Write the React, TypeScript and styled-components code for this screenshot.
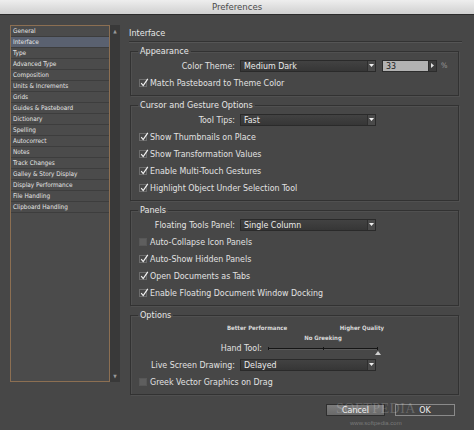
import styled, { createGlobalStyle } from 'styled-components';

const GlobalStyle = createGlobalStyle`
  html, body {
    margin: 0;
    padding: 0;
    background: #474747;
  }
  * {
    box-sizing: border-box;
  }
`;

const font = `"DejaVu Sans Condensed", "DejaVu Sans", sans-serif`;

const Window = styled.div`
  position: relative;
  width: 474px;
  height: 430px;
  overflow: hidden;
  background: #474747;
  font-family: ${font};
  color: #e2e2e2;
`;

const TitleBar = styled.div`
  height: 15px;
  line-height: 14px;
  text-align: center;
  font-size: 9.5px;
  color: #4a4a4a;
  background: linear-gradient(#eeeeee, #d0d0d0);
  border-bottom: 1px solid #2c2c2c;
`;

const Body = styled.div`
  display: flex;
  padding: 10px 0 0 10px;
`;

const Sidebar = styled.div`
  display: flex;
  height: 357px;
`;

const List = styled.ul`
  margin: 0;
  padding: 0;
  list-style: none;
  width: 100px;
  background: #4b4b4b;
  border: 1px solid #8c6f52;
`;

const Item = styled.li<{ $active?: boolean }>`
  height: 11px;
  line-height: 10px;
  padding-left: 2px;
  font-size: 6.4px;
  color: #e4e4e4;
  background: ${(p) => (p.$active ? '#5a6170' : 'transparent')};
  border-bottom: 1px solid #3d3d3d;
  white-space: nowrap;
`;

const Scrollbar = styled.div`
  width: 10px;
  background: #393939;
  display: flex;
  flex-direction: column;
  justify-content: space-between;
  align-items: center;
  padding: 3px 0;
  font-size: 5px;
  color: #9a9a9a;
`;

const Main = styled.div`
  margin-left: 9px;
  width: 333px;
`;

const Heading = styled.div`
  margin-top: 2px;
  height: 15px;
  line-height: 12px;
  font-size: 9px;
  color: #e6e6e6;
  border-bottom: 1px solid #333333;
  box-shadow: 0 1px 0 #555555;
`;

const Group = styled.fieldset`
  margin: 3px 0 0 1px;
  width: 329px;
  padding: 0 7px 4px 7px;
  border: 1px solid #323232;
  box-shadow: inset 1px 1px 0 #505050, 1px 1px 0 #505050;
  min-inline-size: 0;
`;

const Legend = styled.legend`
  padding: 0 2px;
  line-height: 12px;
  font-size: 9px;
  color: #e6e6e6;
`;

const Row = styled.div`
  display: flex;
  align-items: center;
  height: 17px;
  font-size: 8.8px;
`;

const Label = styled.span<{ $width?: number }>`
  width: ${(p) => p.$width ?? 97}px;
  text-align: right;
  white-space: nowrap;
  flex-shrink: 0;
`;

const Select = styled.div<{ $width?: number }>`
  display: flex;
  align-items: center;
  justify-content: space-between;
  margin-left: 5px;
  width: ${(p) => p.$width ?? 136}px;
  height: 12px;
  padding-left: 3px;
  background: linear-gradient(#424242, #363636);
  border: 1px solid #2a2a2a;
  color: #ececec;
  font-size: 8.8px;
  line-height: 10px;
`;

const Arrow = styled.span`
  display: flex;
  align-items: center;
  justify-content: center;
  width: 8px;
  height: 10px;
  border-left: 1px solid #2e2e2e;
  background: #4a4a4a;
`;

const NumberBox = styled.div`
  display: flex;
  margin-left: 6px;
  height: 12px;
`;

const NumberField = styled.div`
  width: 47px;
  height: 12px;
  padding-left: 3px;
  background: #b2b2b2;
  border: 1px solid #2c2c2c;
  color: #1c1c1c;
  font-size: 8.8px;
  line-height: 10px;
`;

const Stepper = styled.span`
  display: flex;
  align-items: center;
  justify-content: center;
  width: 8px;
  height: 12px;
  background: #3c3c3c;
  border: 1px solid #2c2c2c;
  border-left: none;
`;

const Unit = styled.span`
  margin-left: 4px;
  font-size: 7.5px;
  color: #9c9c9c;
`;

const Box = styled.span<{ $checked?: boolean }>`
  position: relative;
  width: 8px;
  height: 8px;
  margin: 0 3px 0 1px;
  flex-shrink: 0;
  background: ${(p) => (p.$checked ? '#474747' : '#5e5e5e')};
  border: 1px solid ${(p) => (p.$checked ? '#6c6c6c' : '#575757')};
  svg {
    position: absolute;
    left: 0;
    top: -2px;
  }
`;

const ScaleLabels = styled.div`
  display: flex;
  justify-content: space-between;
  margin: 1px 0 0 89px;
  width: 157px;
  height: 11px;
  line-height: 11px;
  font-size: 6px;
  font-weight: bold;
  color: #d8d8d8;
`;

const ScaleMid = styled.div`
  margin-left: 130px;
  width: 110px;
  height: 10px;
  line-height: 10px;
  text-align: center;
  font-size: 6px;
  font-weight: bold;
  color: #d8d8d8;
`;

const SliderRow = styled.div`
  display: flex;
  align-items: center;
  height: 10px;
  font-size: 8.8px;
  margin-bottom: 3px;
`;

const Track = styled.div`
  position: relative;
  margin-left: 6px;
  width: 110px;
  height: 1px;
  background: #151515;
  box-shadow: 0 1px 0 #5a5a5a;
`;

const Tick = styled.span<{ $at: number }>`
  position: absolute;
  top: -1px;
  left: ${(p) => p.$at}%;
  width: 1px;
  height: 3px;
  background: #151515;
`;

const Thumb = styled.svg`
  position: absolute;
  right: -3px;
  top: 3px;
`;

const Buttons = styled.div`
  display: flex;
  justify-content: flex-end;
  gap: 10px;
  margin-top: 9px;
  padding-right: 7px;
`;

const Button = styled.div<{ $primary?: boolean }>`
  width: ${(p) => (p.$primary ? 60 : 59)}px;
  height: 12px;
  line-height: 10px;
  text-align: center;
  font-size: 8.8px;
  color: #f0f0f0;
  background: ${(p) => (p.$primary ? '#454545' : 'linear-gradient(#7c7c7c, #6a6a6a)')};
  border: 1px solid ${(p) => (p.$primary ? '#8a8a8a' : '#2e2e2e')};
`;

const Watermark = styled.div`
  position: absolute;
  left: 336px;
  top: 401px;
  font-family: "Liberation Serif", serif;
  font-size: 14px;
  letter-spacing: 0.5px;
  color: rgba(255, 255, 255, 0.2);
  pointer-events: none;
`;

const WatermarkUrl = styled.div`
  position: absolute;
  left: 350px;
  top: 420px;
  font-family: "Liberation Sans", sans-serif;
  font-size: 6px;
  color: #7a7a7a;
`;

const sections = [
  'General',
  'Interface',
  'Type',
  'Advanced Type',
  'Composition',
  'Units & Increments',
  'Grids',
  'Guides & Pasteboard',
  'Dictionary',
  'Spelling',
  'Autocorrect',
  'Notes',
  'Track Changes',
  'Galley & Story Display',
  'Display Performance',
  'File Handling',
  'Clipboard Handling',
];

const DownArrow = () => (
  <Arrow>
    <svg width="5" height="3" viewBox="0 0 5 3">
      <path d="M0 0h5L2.5 3z" fill="#f0f0f0" />
    </svg>
  </Arrow>
);

const Dropdown = ({ value }: { value: string }) => (
  <Select>
    <span>{value}</span>
    <DownArrow />
  </Select>
);

const Check = ({ label, checked = true }: { label: string; checked?: boolean }) => (
  <Row>
    <Box $checked={checked}>
      {checked && (
        <svg width="9" height="9" viewBox="0 0 9 9">
          <path d="M1.2 5.2 L3.2 7.6 L7.8 0.8" fill="none" stroke="#f2f2f2" strokeWidth="1.2" />
        </svg>
      )}
    </Box>
    <span>{label}</span>
  </Row>
);

const App = () => (
  <>
    <GlobalStyle />
    <Window>
      <TitleBar>Preferences</TitleBar>
      <Body>
        <Sidebar>
          <List>
            {sections.map((s) => (
              <Item key={s} $active={s === 'Interface'}>
                {s}
              </Item>
            ))}
          </List>
          <Scrollbar>
            <span>▲</span>
            <span>▼</span>
          </Scrollbar>
        </Sidebar>
        <Main>
          <Heading>Interface</Heading>

          <Group>
            <Legend>Appearance</Legend>
            <Row>
              <Label>Color Theme:</Label>
              <Dropdown value="Medium Dark" />
              <NumberBox>
                <NumberField>33</NumberField>
                <Stepper>
                  <svg width="3" height="5" viewBox="0 0 3 5">
                    <path d="M0 0v5l3-2.5z" fill="#e0e0e0" />
                  </svg>
                </Stepper>
              </NumberBox>
              <Unit>%</Unit>
            </Row>
            <Check label="Match Pasteboard to Theme Color" />
          </Group>

          <Group>
            <Legend>Cursor and Gesture Options</Legend>
            <Row>
              <Label>Tool Tips:</Label>
              <Dropdown value="Fast" />
            </Row>
            <Check label="Show Thumbnails on Place" />
            <Check label="Show Transformation Values" />
            <Check label="Enable Multi-Touch Gestures" />
            <Check label="Highlight Object Under Selection Tool" />
          </Group>

          <Group>
            <Legend>Panels</Legend>
            <Row>
              <Label>Floating Tools Panel:</Label>
              <Dropdown value="Single Column" />
            </Row>
            <Check label="Auto-Collapse Icon Panels" checked={false} />
            <Check label="Auto-Show Hidden Panels" />
            <Check label="Open Documents as Tabs" />
            <Check label="Enable Floating Document Window Docking" />
          </Group>

          <Group>
            <Legend>Options</Legend>
            <ScaleLabels>
              <span>Better Performance</span>
              <span>Higher Quality</span>
            </ScaleLabels>
            <ScaleMid>No Greeking</ScaleMid>
            <SliderRow>
              <Label $width={124}>Hand Tool:</Label>
              <Track>
                <Tick $at={0} />
                <Tick $at={50} />
                <Tick $at={99} />
                <Thumb width="6" height="4" viewBox="0 0 6 4">
                  <path d="M3 0L6 4H0z" fill="#cfcfcf" />
                </Thumb>
              </Track>
            </SliderRow>
            <Row>
              <Label>Live Screen Drawing:</Label>
              <Dropdown value="Delayed" />
            </Row>
            <Check label="Greek Vector Graphics on Drag" checked={false} />
          </Group>

          <Buttons>
            <Button>Cancel</Button>
            <Button $primary>OK</Button>
          </Buttons>
        </Main>
      </Body>
      <Watermark>SOFTPEDIA</Watermark>
      <WatermarkUrl>www.softpedia.com</WatermarkUrl>
    </Window>
  </>
);

export default App;
